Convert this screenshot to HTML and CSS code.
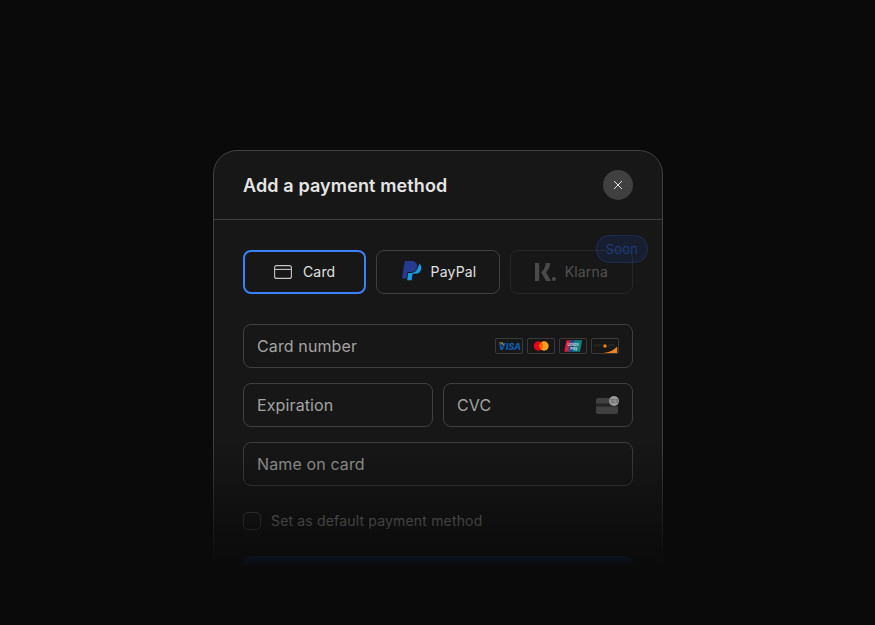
FILE: index.html
```html
<!DOCTYPE html>
<html lang="en">
<head>
<meta charset="utf-8">
<title>Add a payment method</title>
<link rel="stylesheet" href="styles.css">
</head>
<body>
<main class="stage">
  <section class="modal">
    <header class="modal-head">
      <h1 class="modal-title">Add a payment method</h1>
      <button class="close" aria-label="Close">
        <svg class="close-icon" viewBox="0 0 10 10"><path d="M1 1l8 8M9 1l-8 8"/></svg>
      </button>
    </header>
    <div class="modal-body">
      <div class="tabs">
        <button class="tab tab-active">
          <svg class="icon-card" viewBox="0 0 18 14"><rect x=".6" y=".6" width="16.8" height="12.8" rx="2"/><path d="M.6 4.4h16.8"/></svg>
          <span>Card</span>
        </button>
        <button class="tab tab-paypal">
          <svg class="icon-paypal" viewBox="0 0 24 24">
            <path fill="#253b8f" d="M7.016 19.198h-4.2a.562.562 0 0 1-.555-.65L5.093.584A.692.692 0 0 1 5.776 0h7.222c3.417 0 5.904 2.488 5.846 5.5-.006.25-.027.5-.066.747A6.794 6.794 0 0 1 12.071 12H8.743a.69.69 0 0 0-.682.583l-.325 2.056-.013.083-.692 4.39-.015.087z"/>
            <path fill="#1a9ae0" d="M19.79 6.142c-.01.087-.01.175-.023.261a7.76 7.76 0 0 1-7.695 6.598H9.007l-.283 1.795-.013.083-.692 4.39-.134 1.11a.562.562 0 0 0 .555.65h3.612c.34 0 .63-.249.683-.585l.952-6.031a.692.692 0 0 1 .683-.584h2.126a6.793 6.793 0 0 0 6.707-5.752c.306-1.95-.466-3.744-1.912-4.945z"/>
          </svg>
          <span>PayPal</span>
        </button>
        <button class="tab tab-disabled">
          <span class="tab-dim">
            <svg class="icon-klarna" viewBox="0 0 21 18"><path d="M0 0h4.2v18H0zM10.6 0h4.5c0 3.6-1.5 6.9-4 9.2l5 8.8h-5L6 9.2C8.900 7.200 10.600 3.900 10.600 0z"/><circle cx="18.900" cy="16" r="2"/></svg>
            <span>Klarna</span>
          </span>
        </button>
        <span class="soon">Soon</span>
      </div>
      <div class="fields">
        <div class="field">
          <span class="placeholder">Card number</span>
          <div class="brands">
            <svg class="brand" viewBox="0 0 28 16"><path fill="#d59a2a" d="M2 4h5l1.500 3.500z"/><text class="visa" x="15" y="12">VISA</text></svg>
            <svg class="brand" viewBox="0 0 28 16"><circle cx="11" cy="8" r="5.300" fill="#eb001b"/><circle cx="17.500" cy="8" r="5.300" fill="#f79e1b"/><path fill="#ff5f00" d="M14.200 3.800a5.300 5.300 0 0 1 0 8.400 5.300 5.300 0 0 1 0-8.400z"/></svg>
            <svg class="brand" viewBox="0 0 28 16"><path fill="#d81f3c" d="M6.500 1.500h7l-2.500 13H4z"/><path fill="#1b4f8f" d="M11 1.500h7l-2.500 13h-7z"/><path fill="#0b7f84" d="M16 1.500h8.500l-2.500 13h-8.500z"/><text class="up" x="14" y="8">Union</text><text class="up" x="15" y="12">Pay</text></svg>
            <svg class="brand" viewBox="0 0 28 16"><text class="disc" x="6.500" y="9.500">DISC</text><text class="disc" x="20.500" y="9.500">VER</text><circle cx="14" cy="8" r="2" fill="#f58220"/><path fill="#f58220" d="M28 8.500V16H12c7-.6 12-3.400 16-7.500z"/></svg>
          </div>
        </div>
        <div class="field-row">
          <div class="field"><span class="placeholder">Expiration</span></div>
          <div class="field">
            <span class="placeholder">CVC</span>
            <svg class="icon-cvc" viewBox="0 0 23 18"><rect y="2" width="22" height="16" rx="2" fill="#404040"/><rect y="7.500" width="22" height="3" fill="#222"/><circle cx="18" cy="5" r="5" fill="#999"/><text class="cvc-num" x="18" y="6.600">123</text></svg>
          </div>
        </div>
        <div class="field"><span class="placeholder">Name on card</span></div>
      </div>
      <label class="check">
        <span class="checkbox"></span>
        <span>Set as default payment method</span>
      </label>
      <div class="submit"></div>
    </div>
  </section>
  <div class="fade"></div>
</main>
</body>
</html>
```
FILE: styles.css
```css
* { box-sizing: border-box; }
html, body { margin: 0; height: 100%; background: #0a0a0a; overflow: hidden; }
body { font-family: Inter, "Liberation Sans", sans-serif; }
.stage { position: relative; height: 625px; padding: 150px 0 0 1px; display: flex; justify-content: center; overflow: hidden; }
.modal { width: 450px; height: 600px; flex: none; background: #171717; border: 1px solid #404040; border-radius: 24px; }
.modal-head { height: 68px; padding: 0 29px; display: flex; align-items: center; justify-content: space-between; border-bottom: 1px solid #404040; box-sizing: content-box; }
.modal-title { margin: 2px 0 0; font-size: 18px; line-height: 28px; font-weight: 600; letter-spacing: .12px; color: #e5e5e5; }
.close { width: 30px; height: 30px; padding: 0; border: 0; border-radius: 50%; background: #404040; display: flex; align-items: center; justify-content: center; }
.close-icon { width: 10px; height: 10px; fill: none; stroke: #e5e5e5; stroke-width: 1; }
.modal-body { padding: 30px 29px 0; }
.tabs { position: relative; display: grid; grid-template-columns: repeat(3, 1fr); gap: 10px; }
.tab { height: 44px; padding: 0; display: flex; align-items: center; justify-content: center; gap: 11px; background: transparent; border: 1px solid #404040; border-radius: 8px; font: 400 14px/20px Inter, "Liberation Sans", sans-serif; letter-spacing: .17px; color: #e0e0e0; }
.tab-active { border: 2px solid #3b82f6; }
.tab-paypal { gap: 9px; }
.tab-disabled { border-color: #262626; }
.tab-dim { display: flex; align-items: center; gap: 9px; color: #525252; }
.icon-card { width: 18px; height: 14px; fill: none; stroke: #c4c4c4; stroke-width: 1.100; }
.icon-paypal { width: 22px; height: 22px; }
.icon-klarna { width: 21px; height: 18px; fill: #4a4a4a; }
.soon { position: absolute; top: -15px; right: -15px; width: 52px; height: 28px; display: flex; align-items: center; justify-content: center; border-radius: 14px; background: rgba(29, 58, 138, .22); border: 1px solid rgba(37, 68, 150, .35); font-size: 13px; font-weight: 400; letter-spacing: .17px; color: #1e3a7a; }
.fields { margin-top: 30px; display: flex; flex-direction: column; gap: 15px; }
.field-row { display: grid; grid-template-columns: 1fr 1fr; gap: 10px; }
.field { height: 44px; padding: 0 13px; display: flex; align-items: center; justify-content: space-between; border: 1px solid #404040; border-radius: 8px; }
.placeholder { font-size: 16px; line-height: 24px; letter-spacing: .12px; color: #a3a3a3; }
.brands { display: flex; gap: 4px; }
.brand { display: block; width: 28px; height: 16px; border: 1px solid #3a3a3a; border-radius: 2px; }
.visa { font: italic 800 10.500px Inter, "Liberation Sans", sans-serif; fill: #0f5aa8; text-anchor: middle; }
.up { font: 700 4.500px Inter, "Liberation Sans", sans-serif; fill: #d0d0d0; text-anchor: middle; }
.disc { font: 600 4px Inter, "Liberation Sans", sans-serif; fill: #2e2e2e; text-anchor: middle; }
.icon-cvc { width: 23px; height: 18px; }
.cvc-num { font: 700 4.500px Inter, "Liberation Sans", sans-serif; fill: #5a5a5a; text-anchor: middle; }
.check { margin-top: 25px; display: flex; align-items: center; gap: 10px; font-size: 14px; line-height: 20px; letter-spacing: .17px; color: #a3a3a3; }
.checkbox { width: 18px; height: 18px; border: 1px solid #525252; border-radius: 5px; }
.submit { margin-top: 25px; height: 48px; border-radius: 8px; background: #2563eb; }
.fade { position: absolute; left: 0; right: 0; bottom: 0; height: 185px; background: linear-gradient(to bottom, rgba(10, 10, 10, 0), #0a0a0a 69%); pointer-events: none; }
```
